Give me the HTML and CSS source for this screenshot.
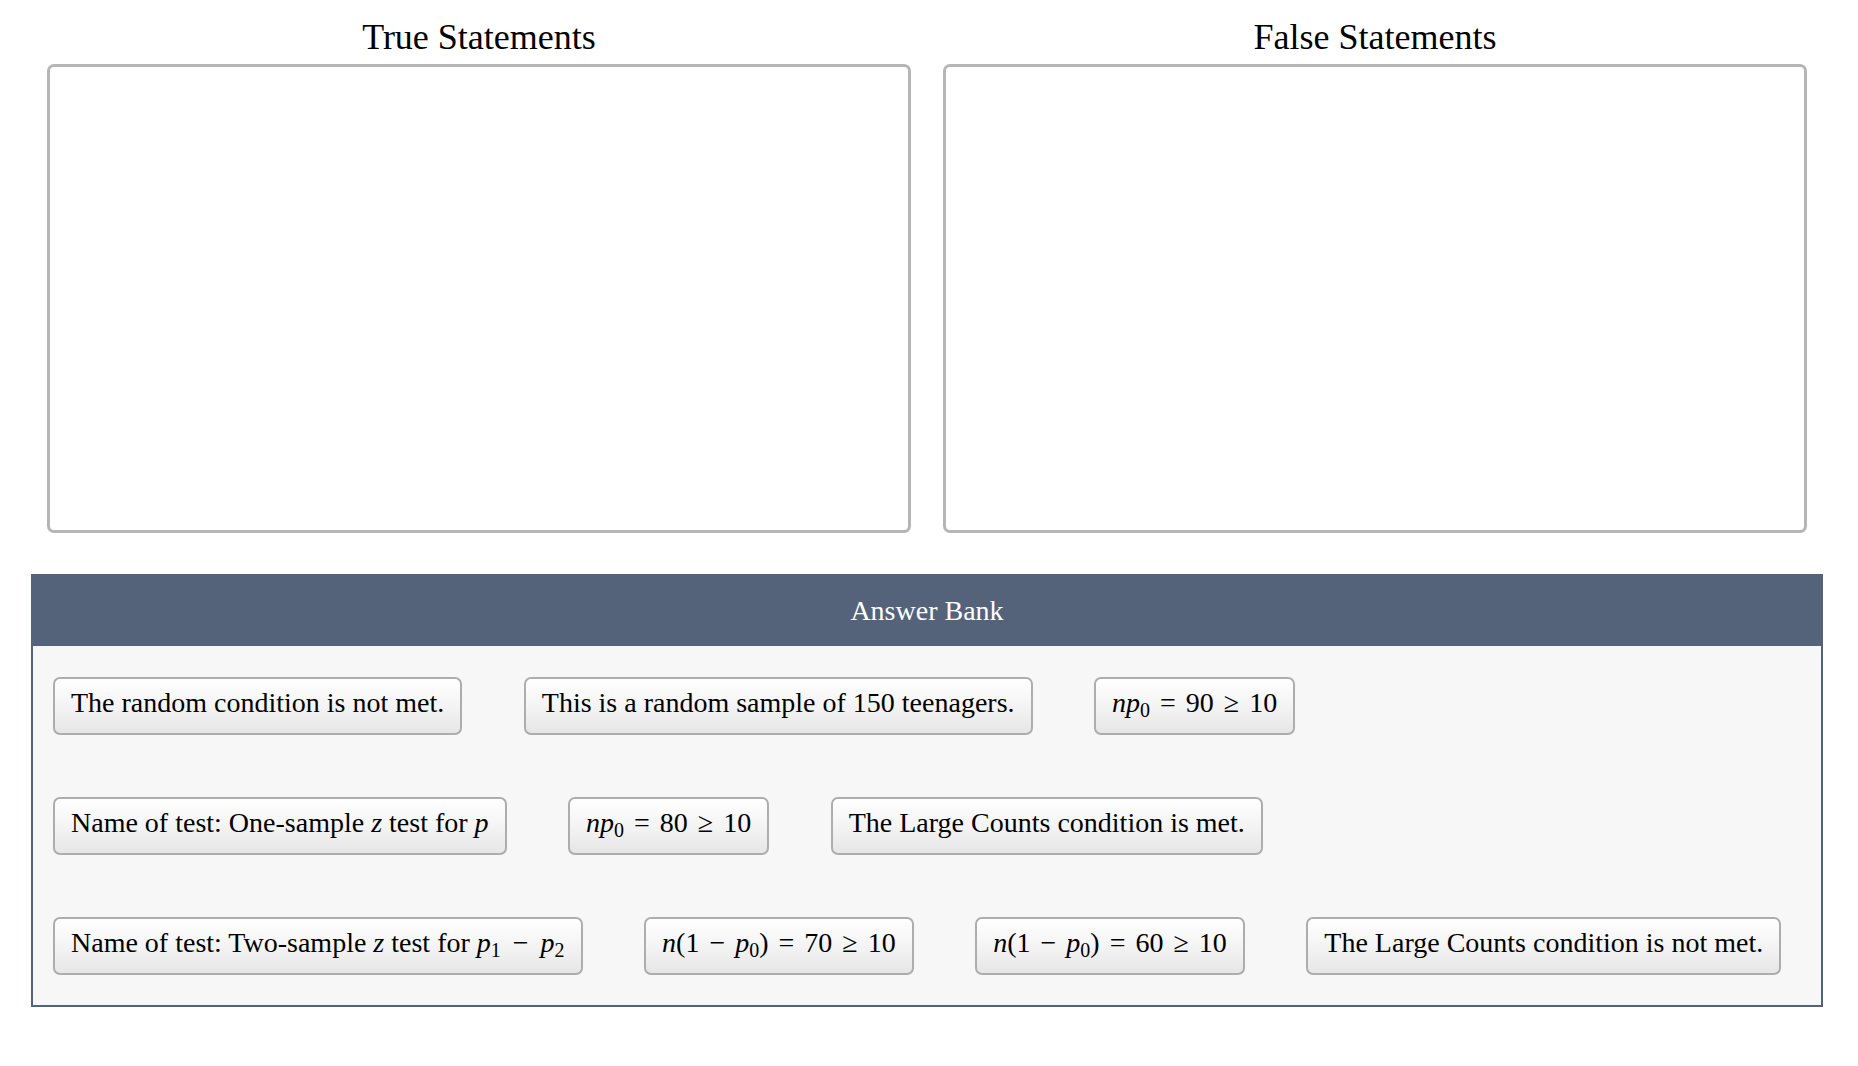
FILE: index.html
```html
<!DOCTYPE html>
<html lang="en">
<head>
<meta charset="utf-8">
<title>Statements</title>
<link rel="stylesheet" href="styles.css">
</head>
<body>
<div class="page">
  <div class="zones">
    <div class="zone">
      <div class="zone-title">True Statements</div>
      <div class="zone-box"></div>
    </div>
    <div class="zone">
      <div class="zone-title">False Statements</div>
      <div class="zone-box"></div>
    </div>
  </div>
  <div class="bank">
    <div class="bank-head">Answer Bank</div>
    <div class="bank-body">
      <div class="bank-row">
        <div class="chip">The random condition is not met.</div>
        <div class="chip">This is a random sample of 150 teenagers.</div>
        <div class="chip"><i>np</i><sub class="sb">0</sub> <span class="op">=</span> 90 <span class="op">≥</span> 10</div>
      </div>
      <div class="bank-row">
        <div class="chip">Name of test: One-sample <i>z</i> test for <i>p</i></div>
        <div class="chip"><i>np</i><sub class="sb">0</sub> <span class="op">=</span> 80 <span class="op">≥</span> 10</div>
        <div class="chip">The Large Counts condition is met.</div>
      </div>
      <div class="bank-row">
        <div class="chip">Name of test: Two-sample <i>z</i> test for <i>p</i><sub class="sb">1</sub> <span class="op op-wide">−</span> <i>p</i><sub class="sb">2</sub></div>
        <div class="chip"><i>n</i>(1 <span class="op">−</span> <i>p</i><sub class="sb">0</sub>) <span class="op">=</span> 70 <span class="op">≥</span> 10</div>
        <div class="chip"><i>n</i>(1 <span class="op">−</span> <i>p</i><sub class="sb">0</sub>) <span class="op">=</span> 60 <span class="op">≥</span> 10</div>
        <div class="chip">The Large Counts condition is not met.</div>
      </div>
    </div>
  </div>
</div>
</body>
</html>
```

FILE: styles.css
```css
html, body {
  margin: 0;
  padding: 0;
  background: #ffffff;
}

body {
  font-family: "Liberation Serif", "Times New Roman", serif;
  color: #000;
}

.page {
  width: 1792px;
  margin-left: 31px;
}

.zones {
  display: flex;
  gap: 32px;
  padding: 0 16px;
}

.zone {
  flex: 1;
  display: flex;
  flex-direction: column;
}

.zone-title {
  font-size: 36px;
  line-height: 41px;
  text-align: center;
  margin-top: 17px;
  margin-bottom: 6px;
}

.zone-box {
  height: 463px;
  border: 3px solid #b5b5b5;
  border-radius: 7px;
  background: #fff;
}

.bank {
  margin-top: 41px;
  border: 2px solid #54637a;
  background: #f7f7f7;
}

.bank-head {
  height: 70px;
  background: #54637a;
  color: #fff;
  font-size: 28px;
  display: flex;
  align-items: center;
  justify-content: center;
}

.bank-body {
  padding: 31px 20px 30px;
  display: flex;
  flex-direction: column;
  gap: 62px;
}

.bank-row {
  display: flex;
  gap: 61.5px;
}

.chip {
  font-size: 28px;
  line-height: 32px;
  padding: 7.5px 16px 14.5px;
  border: 2px solid #adadad;
  border-radius: 7px;
  background: linear-gradient(to bottom, #ffffff 0%, #f4f4f4 50%, #e6e6e6 100%);
  white-space: nowrap;
}

.chip i {
  font-style: italic;
}

.sb {
  font-size: 20px;
  line-height: 0;
  vertical-align: -5px;
}

.op {
  padding: 0 3px;
}

.op-wide {
  padding: 0 5px;
}
```
